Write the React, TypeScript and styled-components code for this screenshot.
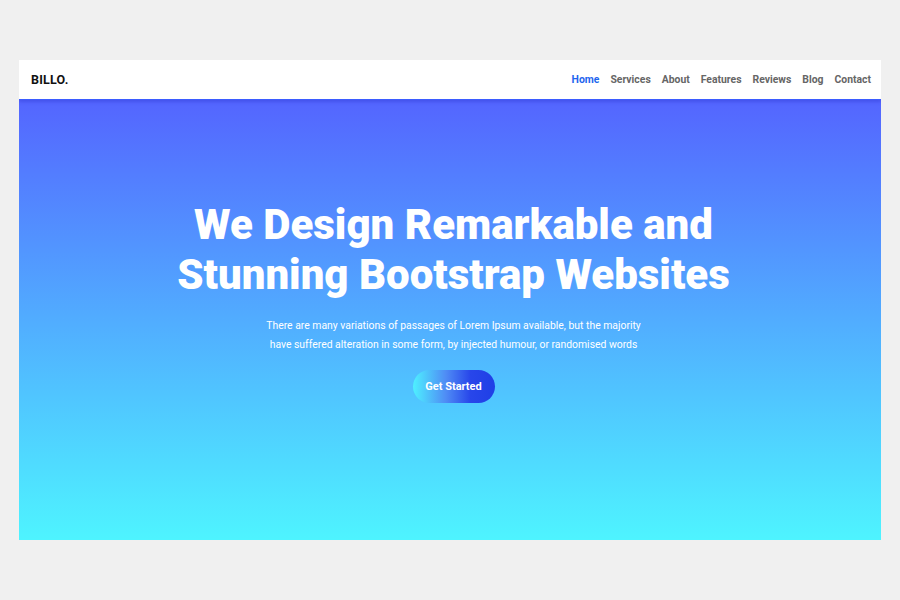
import React from "react";
import styled, { createGlobalStyle } from "styled-components";

const Global = createGlobalStyle`
  html, body { margin: 0; padding: 0; background: #f0f0f0; }
  body { font-family: Roboto, "Liberation Sans", sans-serif; }
  * { box-sizing: border-box; }
`;

const Page = styled.div`
  width: 900px;
  height: 600px;
  padding: 60px 19px;
  background: #f0f0f0;
`;

const Frame = styled.div`
  width: 862px;
  height: 480px;
  display: flex;
  flex-direction: column;
  overflow: hidden;
`;

const NavBar = styled.header`
  height: 40px;
  flex: none;
  background: #fff;
  display: flex;
  align-items: center;
  justify-content: space-between;
  padding: 0 10px 0 12px;
  border-bottom: 1px solid #3b5cff;
  position: relative;
  z-index: 1;
  box-shadow: 0 2px 3px rgba(40, 50, 200, 0.35);
`;

const Brand = styled.div`
  font-size: 12.5px;
  font-weight: 700;
  color: #111;
  letter-spacing: 0.2px;
`;

const Links = styled.nav`
  display: flex;
  gap: 11px;
`;

const NavLink = styled.a<{ $active?: boolean }>`
  font-size: 10.4px;
  font-weight: 700;
  color: ${(p) => (p.$active ? "#1f66ee" : "#666")};
  text-decoration: none;
`;

const Hero = styled.section`
  flex: 1;
  background: linear-gradient(180deg, #5465ff 0%, #4ef4ff 100%);
  display: flex;
  flex-direction: column;
  align-items: center;
  padding: 100px 0 0 7px;
  color: #fff;
  text-align: center;
`;

const Title = styled.h1`
  margin: 0;
  font-size: 42px;
  line-height: 50px;
  font-weight: 900;
`;

const Lead = styled.p`
  margin: 16px 0 0;
  font-size: 10.4px;
  line-height: 19px;
  font-weight: 400;
`;

const Button = styled.button`
  margin-top: 16px;
  height: 33px;
  width: 82px;
  border: none;
  border-radius: 17px;
  background: linear-gradient(90deg, #4ef0ff 0%, #4f8cf5 40%, #2846ea 70%, #1f3fe6 100%);
  color: #fff;
  font-family: Roboto, "Liberation Sans", sans-serif;
  font-size: 11px;
  font-weight: 700;
  cursor: pointer;
`;

const links = ["Home", "Services", "About", "Features", "Reviews", "Blog", "Contact"];

export default function App() {
  return (
    <>
      <Global />
      <Page>
        <Frame>
          <NavBar>
            <Brand>BILLO.</Brand>
            <Links>
              {links.map((l, i) => (
                <NavLink key={l} href="#" $active={i === 0}>
                  {l}
                </NavLink>
              ))}
            </Links>
          </NavBar>
          <Hero>
            <Title>
              We Design Remarkable and
              <br />
              Stunning Bootstrap Websites
            </Title>
            <Lead>
              There are many variations of passages of Lorem Ipsum available, but the majority
              <br />
              have suffered alteration in some form, by injected humour, or randomised words
            </Lead>
            <Button>Get Started</Button>
          </Hero>
        </Frame>
      </Page>
    </>
  );
}
